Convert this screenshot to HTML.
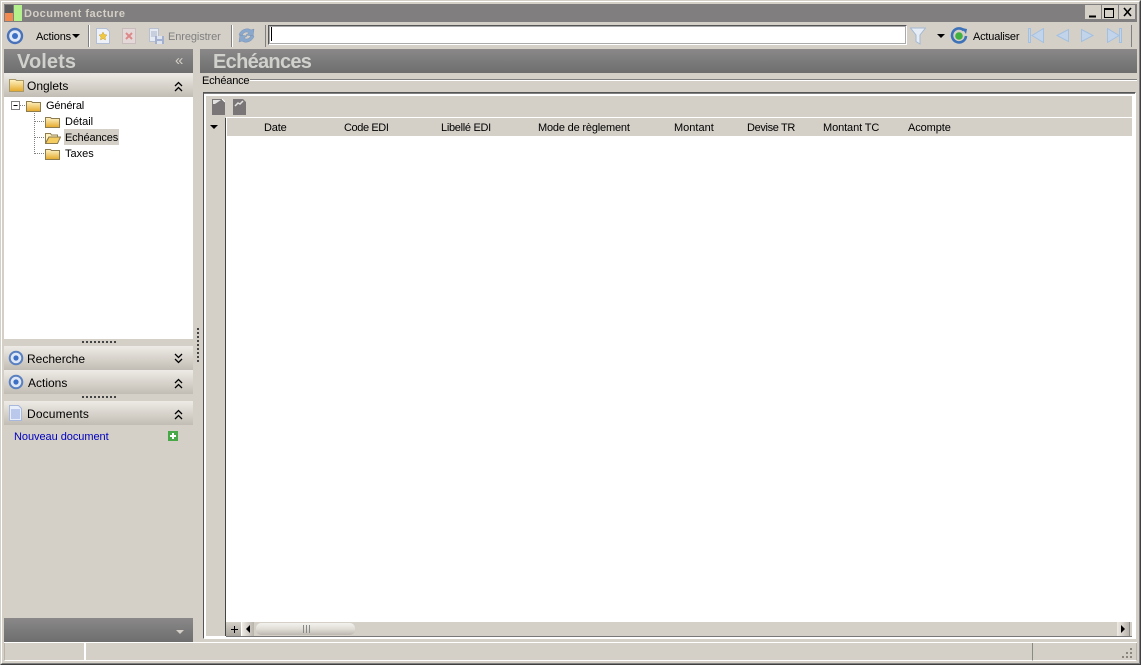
<!DOCTYPE html>
<html><head><meta charset="utf-8"><title>Document facture</title>
<style>
html,body{margin:0;padding:0;background:#d4d0c8}
#r{position:relative;width:1141px;height:665px;overflow:hidden;background:#d4d0c8;font:11px "Liberation Sans",sans-serif;color:#000}
#r div,#r span.t,#r svg{position:absolute}
.t{position:absolute;white-space:nowrap;line-height:14px;margin-top:1px;letter-spacing:-.15px}
.bar{background:linear-gradient(#8a8888,#6e6e6e)}
.hd{background:linear-gradient(#eeebe6,#d6d2ca 55%,#c2bdb4);left:4px;width:189px;height:24px}
.t.big{font-weight:bold;font-size:20px;color:#d0d0cc;line-height:24px}
.t.p{font-size:12px;margin-top:0;letter-spacing:0}
.g{color:#808080}
</style></head><body>
<div id="r">
<svg width="0" height="0"><defs>
<linearGradient id="fg" x1="0" y1="0" x2="0" y2="1"><stop offset="0" stop-color="#fff4c8"/><stop offset="1" stop-color="#e4a828"/></linearGradient>
</defs></svg>
<!-- window frame -->
<div style="left:0;top:0;width:1141px;height:665px;box-sizing:border-box;border:1px solid;border-color:#d4d0c8 #404040 #404040 #d4d0c8"></div>
<div style="left:1px;top:1px;width:1139px;height:663px;box-sizing:border-box;border:1px solid;border-color:#fff #808080 #808080 #fff"></div>
<!-- title bar -->
<div style="left:4px;top:4px;width:1133px;height:18px;background:#807e7e"></div>
<div style="left:5px;top:5px;width:8px;height:16px;background:#5a5a5a"></div>
<div style="left:5px;top:13px;width:8px;height:8px;background:#f08a50"></div>
<div style="left:14px;top:5px;width:8px;height:16px;background:#b4f08c"></div>
<span class="t" style="left:24px;top:6px;font-weight:bold;color:#d4d0c8;letter-spacing:.5px">Document facture</span>
<!-- window buttons -->
<svg style="left:1085px;top:5px" width="50" height="14" viewBox="0 0 50 14">
<g fill="#d4d0c8"><rect width="16" height="14"/><rect x="17" width="16" height="14"/><rect x="34" width="16" height="14"/></g>
<path d="M4 11.500h7" stroke="#000" stroke-width="2"/>
<path d="M19.500 3.500h9v9h-9zM19.500 4.500h9" fill="none" stroke="#000"/>
<path d="M39 3l7 8M46 3l-7 8" stroke="#000" stroke-width="1.600"/>
</svg>
<!-- toolbar -->
<svg style="left:6px;top:27px" width="18" height="18" viewBox="0 0 18 18"><circle cx="9" cy="9" r="7" fill="#dfe8f6" stroke="#4a72b8" stroke-width="2.400"/><circle cx="9" cy="9" r="3" fill="#3d6fc4"/></svg>
<span class="t" style="left:36px;top:29px">Actions</span>
<svg style="left:72px;top:34px" width="8" height="5"><path d="M0 0h8L4 4z"/></svg>
<div style="left:88px;top:25px;width:1px;height:22px;background:#808080"></div><div style="left:89px;top:25px;width:1px;height:22px;background:#fff"></div>
<svg style="left:96px;top:28px" width="14" height="16" viewBox="0 0 14 16"><path d="M.5.500h10l3 3v12H.5z" fill="#eef1f8" stroke="#b5bfd4"/><path d="M7 4l1.300 2.600 2.700.4-2 2 .5 3L7 10.600 4.500 12l.5-3-2-2 2.700-.4z" fill="#f0c840" stroke="#caa030" stroke-width=".5"/></svg>
<svg style="left:122px;top:28px" width="14" height="16" viewBox="0 0 14 16"><rect x=".5" y=".5" width="13" height="15" fill="#e4d8d8" stroke="#c8bcbc"/><path d="M4 5l6 6M10 5l-6 6" stroke="#d88" stroke-width="2"/></svg>
<svg style="left:149px;top:28px" width="16" height="16" viewBox="0 0 16 16"><path d="M.5.500h9v13h-9z" fill="#e6eaf2" stroke="#b8c0d0"/><path d="M2 4h6M2 6h6M2 8h6" stroke="#a8b4cc"/><rect x="6" y="8" width="9" height="8" fill="#a4b0d0"/><rect x="8" y="8" width="5" height="3" fill="#dfe3ee"/><rect x="8" y="13" width="5" height="3" fill="#dfe3ee"/></svg>
<span class="t g" style="left:168px;top:29px;letter-spacing:-.1px">Enregistrer</span>
<div style="left:231px;top:25px;width:1px;height:22px;background:#808080"></div><div style="left:232px;top:25px;width:1px;height:22px;background:#fff"></div>
<svg style="left:238px;top:27px" width="17" height="17" viewBox="0 0 17 17"><path d="M1 8C2 3 9 0 13 3l3-1-1 7-7-1 3-2C9 4 5 5 4 9z" fill="#8aa8cc" stroke="#7590b4" stroke-width=".5"/><path d="M16 9c-1 5-8 8-12 5l-3 1 1-7 7 1-3 2c2 2 6 1 7-3z" fill="#8aa8cc" stroke="#7590b4" stroke-width=".5"/></svg>
<div style="left:265px;top:25px;width:1px;height:22px;background:#808080"></div>
<div style="left:268px;top:25px;width:639px;height:20px;box-sizing:border-box;background:#fff;border:1px solid;border-color:#555 #fff #fff #555;outline:1px solid #aaa;outline-offset:-2px"></div>
<div style="left:271px;top:27px;width:1px;height:14px;background:#000"></div>
<svg style="left:910px;top:27px" width="16" height="18" viewBox="0 0 16 18"><path d="M.5 1h15L10 8v9l-4-2.500V8z" fill="#e6edf6" stroke="#a4b8d2"/></svg>
<svg style="left:937px;top:34px" width="8" height="5"><path d="M0 0h8L4 4z"/></svg>
<svg style="left:950px;top:27px" width="18" height="18" viewBox="0 0 18 18"><path d="M14 3.500A7 7 0 1 0 16 9" fill="none" stroke="#3d72b8" stroke-width="2.600"/><path d="M12 1l5 1-1 5z" fill="#3d72b8"/><circle cx="9" cy="9" r="3.800" fill="#40b040"/></svg>
<span class="t" style="left:973px;top:29px;letter-spacing:-.2px">Actualiser</span>
<svg style="left:1028px;top:28px" width="96" height="15" viewBox="0 0 96 15" fill="#c2d4ea" stroke="#a4c0e0"><rect x=".5" y=".5" width="2" height="14"/><path d="M15.500.5v14L4 7.500z"/><path d="M40.500 1.500v12L29 7.500z"/><path d="M53.500 1.500v12L65 7.500z"/><path d="M79.500.5v14L91 7.500z"/><rect x="91.500" y=".5" width="2" height="14"/></svg>
<div style="left:1131px;top:25px;width:1px;height:22px;background:#808080"></div>
<!-- left panel -->
<div class="bar" style="left:4px;top:49px;width:189px;height:24px"></div>
<span class="t big" style="left:17px;top:49px;letter-spacing:.1px">Volets</span>
<span class="t" style="left:175px;top:53px;font-size:15px;color:#d4d0c8">«</span>
<div class="hd" style="top:73px"></div>
<svg style="left:9px;top:78px" width="15" height="14" viewBox="0 0 15 14"><path d="M.5 1.500h6l1 1h7v11H.5z" fill="url(#fg)" stroke="#a89868"/></svg>
<span class="t p" style="left:27px;top:79px">Onglets</span>
<svg style="left:174px;top:81px" width="9" height="11" viewBox="0 0 9 11" fill="none" stroke="#000" stroke-width="1.300"><path d="M1 5l3.500-3.500L8 5M1 10l3.500-3.500L8 10"/></svg>
<div style="left:4px;top:97px;width:189px;height:242px;background:#fff"></div>
<!-- tree -->
<svg style="left:10px;top:98px" width="50" height="64" viewBox="0 0 50 64" fill="none">
<rect x="1.500" y="3.500" width="8" height="8" fill="#fff" stroke="#808080"/><path d="M3.500 7.500h4" stroke="#000"/>
<path d="M10 7.500h5M24.500 13v44M25 23.500h9M25 39.500h9M25 55.500h9" stroke="#808080" stroke-dasharray="1 1"/>
</svg>
<svg style="left:26px;top:100px" width="15" height="12" viewBox="0 0 15 12"><path d="M.5 1.500h5l1 1h8v9H.5z" fill="url(#fg)" stroke="#8c7c50"/></svg>
<svg style="left:45px;top:116px" width="15" height="12" viewBox="0 0 15 12"><path d="M.5 1.500h5l1 1h8v9H.5z" fill="url(#fg)" stroke="#8c7c50"/></svg>
<svg style="left:45px;top:148px" width="15" height="12" viewBox="0 0 15 12"><path d="M.5 1.500h5l1 1h8v9H.5z" fill="url(#fg)" stroke="#8c7c50"/></svg>
<svg style="left:45px;top:132px" width="16" height="12" viewBox="0 0 16 12"><path d="M.5 1.500h5l1 1.500h6v2H4L.5 11z" fill="#fff2c0" stroke="#8c7c50"/><path d="M4 5h11.500l-3 6.500H.5z" fill="#f4cc60" stroke="#8c7c50"/></svg>
<span class="t" style="left:46px;top:98px">Général</span>
<span class="t" style="left:65px;top:114px;letter-spacing:0">Détail</span>
<div style="left:64px;top:129px;width:55px;height:16px;background:#d4d0c8"></div>
<span class="t" style="left:65px;top:130px">Echéances</span>
<span class="t" style="left:65px;top:146px;letter-spacing:0">Taxes</span>
<!-- splitter dots -->
<div style="left:82px;top:341px;width:35px;height:2px;background:repeating-linear-gradient(90deg,#444 0 2px,#d4d0c8 2px 4px)"></div>
<div class="hd" style="top:346px"></div>
<svg style="left:8px;top:350px" width="16" height="16" viewBox="0 0 16 16"><circle cx="8" cy="8" r="6.300" fill="#dfe8f6" stroke="#5a80c0" stroke-width="2"/><circle cx="8" cy="8" r="2.600" fill="#3d6fc4"/></svg>
<span class="t p" style="left:27px;top:352px">Recherche</span>
<svg style="left:174px;top:353px" width="9" height="11" viewBox="0 0 9 11" fill="none" stroke="#000" stroke-width="1.300"><path d="M1 1l3.500 3.500L8 1M1 6l3.500 3.500L8 6"/></svg>
<div class="hd" style="top:370px"></div>
<svg style="left:8px;top:374px" width="16" height="16" viewBox="0 0 16 16"><circle cx="8" cy="8" r="6.300" fill="#dfe8f6" stroke="#5a80c0" stroke-width="2"/><circle cx="8" cy="8" r="2.600" fill="#3d6fc4"/></svg>
<span class="t p" style="left:28px;top:376px">Actions</span>
<svg style="left:174px;top:378px" width="9" height="11" viewBox="0 0 9 11" fill="none" stroke="#000" stroke-width="1.300"><path d="M1 5l3.500-3.500L8 5M1 10l3.500-3.500L8 10"/></svg>
<div style="left:82px;top:396px;width:35px;height:2px;background:repeating-linear-gradient(90deg,#444 0 2px,#d4d0c8 2px 4px)"></div>
<div class="hd" style="top:401px"></div>
<svg style="left:9px;top:405px" width="13" height="16" viewBox="0 0 13 16"><path d="M.5.500h9l3 3v12H.5z" fill="#e8eefa" stroke="#a8b8dc"/><path d="M2 5h9M2 7h9M2 9h9M2 11h9M2 13h9" stroke="#8ca4dc"/></svg>
<span class="t p" style="left:27px;top:407px;letter-spacing:.15px">Documents</span>
<svg style="left:174px;top:409px" width="9" height="11" viewBox="0 0 9 11" fill="none" stroke="#000" stroke-width="1.300"><path d="M1 5l3.500-3.500L8 5M1 10l3.500-3.500L8 10"/></svg>
<span class="t" style="left:14px;top:429px;color:#0000c0;letter-spacing:-.05px">Nouveau document</span>
<svg style="left:168px;top:431px" width="10" height="10" viewBox="0 0 10 10"><rect width="10" height="10" fill="#48a848"/><path d="M5 2v6M2 5h6" stroke="#fff" stroke-width="2"/></svg>
<div class="bar" style="left:4px;top:618px;width:189px;height:24px"></div>
<svg style="left:176px;top:630px" width="8" height="5"><path d="M0 0h8L4 4z" fill="#d4d0c8"/></svg>
<!-- vertical splitter -->
<div style="left:197px;top:328px;width:2px;height:34px;background:repeating-linear-gradient(#444 0 2px,#d4d0c8 2px 4px)"></div>
<!-- right panel -->
<div class="bar" style="left:200px;top:49px;width:937px;height:24px"></div>
<span class="t big" style="left:213px;top:49px;letter-spacing:-.7px">Echéances</span>
<div style="left:250px;top:79px;width:887px;height:1px;background:#808080"></div><div style="left:250px;top:80px;width:887px;height:1px;background:#fff"></div>
<span class="t" style="left:202px;top:73px;letter-spacing:-.2px">Echéance</span>
<!-- grid frame -->
<div style="left:203px;top:92px;width:933px;height:547px;box-sizing:border-box;border:1px solid;border-color:#555 #fff #fff #555;background:#fff"></div>
<div style="left:204px;top:93px;width:931px;height:1px;background:#808080"></div>
<div style="left:206px;top:96px;width:926px;height:540px;background:#fff"></div>
<div style="left:206px;top:96px;width:926px;height:21px;background:#d4d0c8"></div>
<svg style="left:212px;top:98px" width="13" height="17" viewBox="0 0 13 17"><path d="M0 1h10l3 3v13H0z" fill="#7a7678"/><path d="M1 2h8L3 6H1z" fill="#e4e2e0"/><path d="M10 1l3 3" stroke="#fff"/></svg>
<svg style="left:233px;top:98px" width="13" height="17" viewBox="0 0 13 17"><path d="M0 1h10l3 3v13H0z" fill="#7a7678"/><path d="M2 8l3-3 2 1 3-3" stroke="#e4e2e0" stroke-width="1.500" fill="none"/></svg>
<!-- header -->
<div style="left:206px;top:117px;width:20px;height:519px;background:#d4d0c8"></div>
<div style="left:226px;top:118px;width:906px;height:18px;background:#d4d0c8"></div>
<div style="left:251px;top:117px;width:881px;height:1px;background:#fff"></div>
<div style="left:225px;top:118px;width:1px;height:518px;background:#444"></div>
<div style="left:226px;top:118px;width:1px;height:18px;background:#fff"></div>
<svg style="left:210px;top:125px" width="8" height="5"><path d="M0 0h8L4 4z"/></svg>
<span class="t" style="left:264px;top:120px">Date</span>
<span class="t" style="left:344px;top:120px;letter-spacing:-.4px">Code EDI</span>
<span class="t" style="left:441px;top:120px;letter-spacing:-.3px">Libellé EDI</span>
<span class="t" style="left:538px;top:120px;letter-spacing:-.18px">Mode de règlement</span>
<span class="t" style="left:674px;top:120px;letter-spacing:0">Montant</span>
<span class="t" style="left:747px;top:120px;letter-spacing:-.35px">Devise TR</span>
<span class="t" style="left:823px;top:120px;letter-spacing:-.1px">Montant TC</span>
<span class="t" style="left:908px;top:120px;letter-spacing:-.1px">Acompte</span>
<!-- scrollbar -->
<div style="left:226px;top:622px;width:906px;height:14px;background:#d4d0c8"></div>
<div style="left:226px;top:622px;width:15px;height:14px;background:linear-gradient(#d4d0c8,#aaa69e)"></div>
<svg style="left:230px;top:625px" width="9" height="9" viewBox="0 0 9 9"><path d="M4.500 1v7M1 4.500h7" stroke="#000"/></svg>
<div style="left:241px;top:622px;width:13px;height:14px;background:linear-gradient(90deg,#eeeae4,#b8b4ac);border-left:1px solid #fff;box-sizing:border-box"></div>
<svg style="left:246px;top:625px" width="5" height="9"><path d="M4 0v8L0 4z"/></svg>
<div style="left:256px;top:623px;width:99px;height:12px;border-radius:5px;background:linear-gradient(#f4f2ee,#e0ddd6 50%,#bcb8b0)"></div>
<div style="left:303px;top:625px;width:8px;height:8px;background:repeating-linear-gradient(90deg,#888 0 1px,transparent 1px 3px)"></div>
<div style="left:1117px;top:622px;width:13px;height:14px;background:linear-gradient(90deg,#eeeae4,#b8b4ac);border-right:1px solid #888;box-sizing:border-box"></div>
<svg style="left:1121px;top:625px" width="5" height="9"><path d="M0 0v8l4-4z"/></svg>
<div style="left:226px;top:636px;width:906px;height:1px;background:#777"></div>
<!-- status bar -->
<div style="left:4px;top:642px;width:1133px;height:1px;background:#fff"></div>
<div style="left:4px;top:643px;width:81px;height:18px;box-sizing:border-box;border:solid;border-width:0 1px 1px 1px;border-color:#a0a0a0 #fff #fff #b8b4ac"></div>
<div style="left:85px;top:643px;width:948px;height:18px;box-sizing:border-box;border:solid;border-width:0 1px 1px 1px;border-color:#a0a0a0 #8a8a84 #fff #fff"></div>
<div style="left:1033px;top:643px;width:104px;height:18px;box-sizing:border-box;border:solid;border-width:0 1px 1px 0;border-color:#a0a0a0 #b8b4ac #fff #fff"></div>
<svg style="left:1122px;top:648px" width="12" height="12" viewBox="0 0 12 12" fill="#8a867e"><rect x="8" y="0" width="2" height="2"/><rect x="4" y="4" width="2" height="2"/><rect x="8" y="4" width="2" height="2"/><rect x="0" y="8" width="2" height="2"/><rect x="4" y="8" width="2" height="2"/><rect x="8" y="8" width="2" height="2"/></svg>
</div>
</body></html>
